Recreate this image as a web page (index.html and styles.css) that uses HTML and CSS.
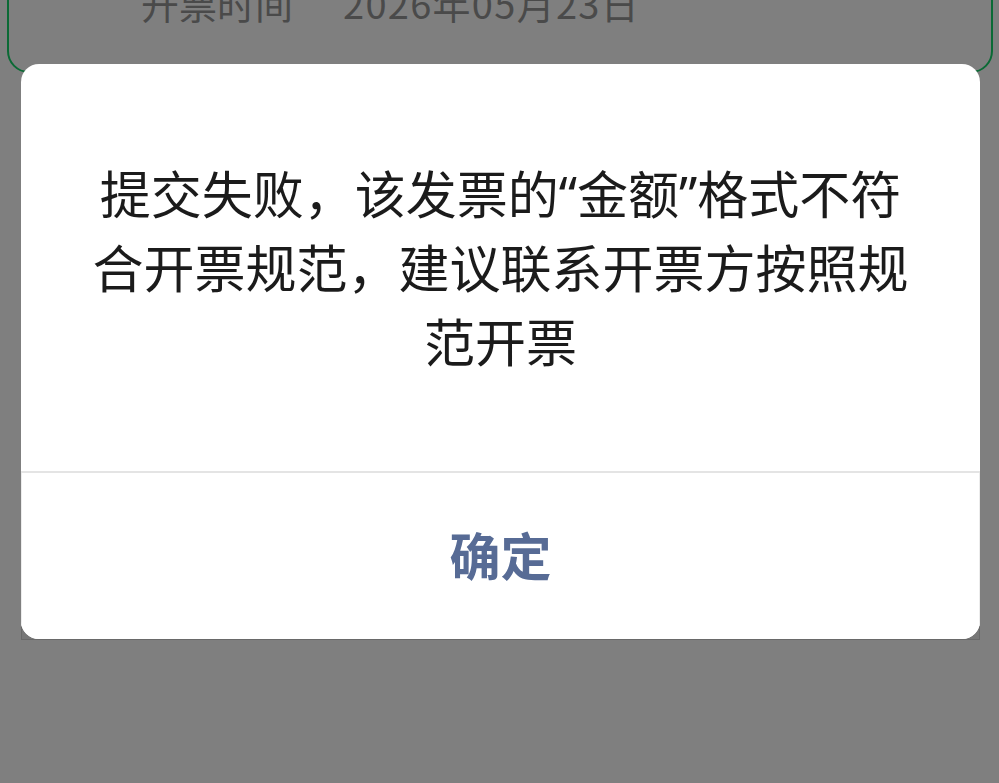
FILE: index.html
```html
<!DOCTYPE html>
<html lang="zh-CN">
<head>
<meta charset="utf-8">
<title>提交失败</title>
<link rel="stylesheet" href="styles.css">
</head>
<body>
<div class="page">
  <div class="info-card">
    <div class="info-row">
      <span class="info-label">开票时间</span>
      <span class="info-value">2026年05月23日</span>
    </div>
  </div>
  <div class="detail-card"></div>
</div>
<div class="mask">
  <div class="dialog">
    <div class="dialog-body">
      <p class="dialog-text">提交失败，该发票的“金额”格式不符合开票规范，建议联系开票方按照规范开票</p>
    </div>
    <div class="dialog-footer">
      <button class="dialog-btn">确定</button>
    </div>
  </div>
</div>
</body>
</html>
```

FILE: styles.css
```css
html, body {
  margin: 0;
  padding: 0;
  background: #ffffff;
  font-family: "Noto Sans CJK SC", "Noto Sans", sans-serif;
}
.page {
  display: flex;
  flex-direction: column;
  overflow: hidden;
  height: 783px;
}
.info-card {
  flex: none;
  margin: -40px 6px 0 7px;
  height: 113px;
  border: 2px solid #16d46a;
  border-radius: 0 0 22px 22px;
  box-sizing: border-box;
}
.info-row {
  display: flex;
  padding: 17px 0 0 132px;
  font-size: 38px;
  line-height: 48px;
  color: #959595;
}
.info-label {
  width: 202px;
}
.info-value {
  letter-spacing: 1.3px;
}
.detail-card {
  flex: none;
  margin: 16px 19px 0 21px;
  height: 551px;
  background: #eeeeee;
  border: 1px solid #d2d2d2;
  box-sizing: border-box;
}
.mask {
  position: fixed;
  inset: 0;
  background: rgba(0, 0, 0, 0.5);
  display: flex;
  align-items: flex-start;
  padding: 64px 0 0 21px;
}
.dialog {
  width: 959px;
  background: #ffffff;
  border-radius: 18px;
  overflow: hidden;
  display: flex;
  flex-direction: column;
}
.dialog-body {
  height: 407px;
  display: flex;
  align-items: center;
  justify-content: center;
  padding: 0 62px;
  box-sizing: border-box;
}
.dialog-text {
  margin: 0;
  font-family: "Noto Sans", "Noto Sans CJK SC", sans-serif;
  font-size: 51px;
  line-height: 74px;
  color: #1b1b1b;
  text-align: center;
}
.dialog-footer {
  border-top: 2px solid #e4e4e4;
  height: 168px;
  box-sizing: border-box;
  display: flex;
}
.dialog-btn {
  flex: 1;
  border: 0;
  border-left: 1px solid #ececec;
  border-right: 1px solid #ececec;
  background: #ffffff;
  font-family: "Noto Sans CJK SC", sans-serif;
  font-size: 51px;
  font-weight: 700;
  color: #576b95;
  padding: 0 0 4px;
}
```
